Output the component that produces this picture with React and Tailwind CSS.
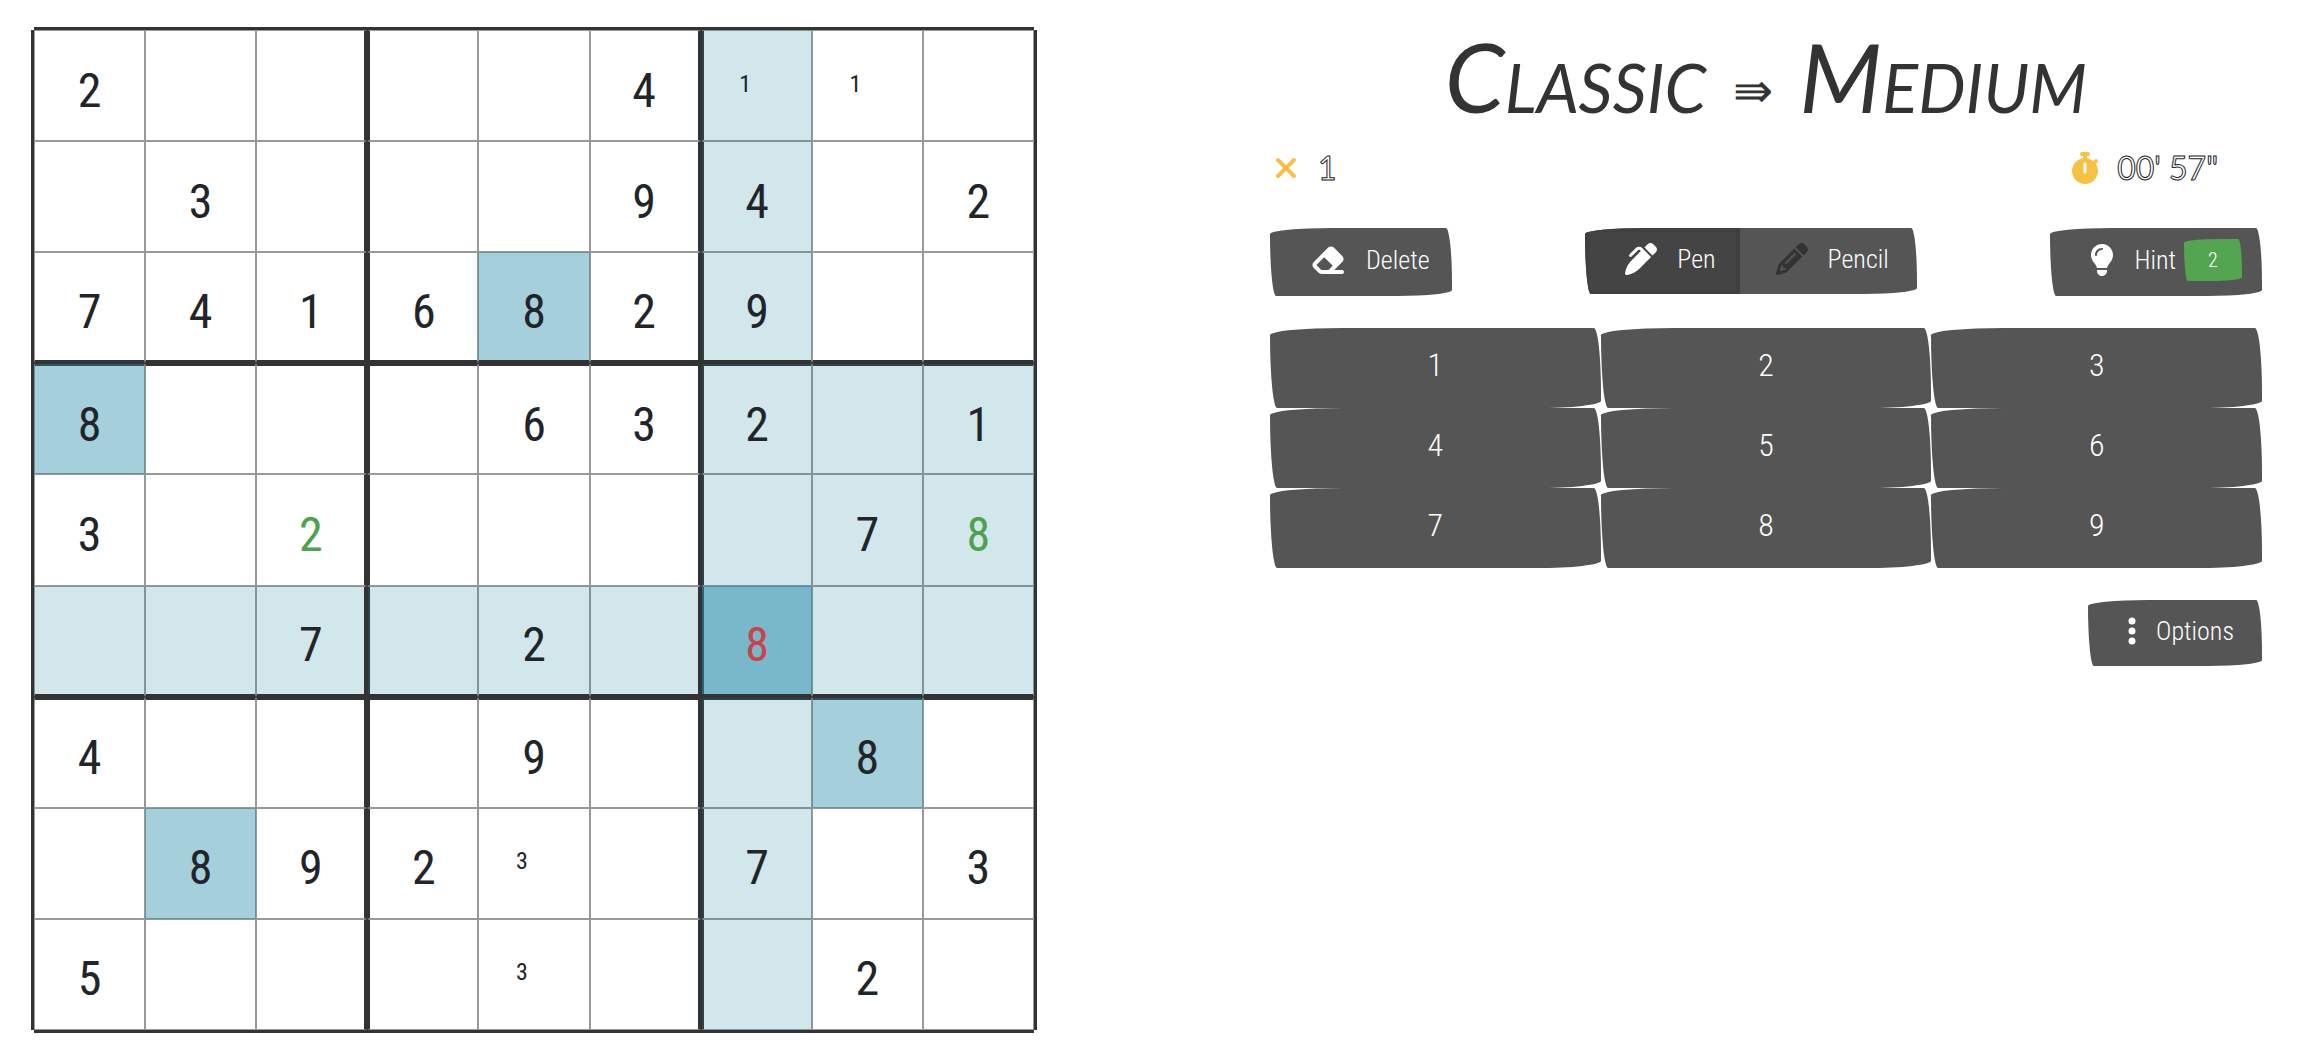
import { FaEraser, FaPenClip, FaPencil, FaLightbulb, FaStopwatch, FaXmark, FaEllipsisVertical } from "react-icons/fa6";

const rows = [
  "2....4...",
  ".3...94.2",
  "7416829..",
  "8...632.1",
  "3.2....78",
  "..7.2.8..",
  "4...9..8.",
  ".892..7.3",
  "5......2.",
];
const notes = { "0-6": 1, "0-7": 1, "7-4": 3, "8-4": 3 };
const SEL = { r: 5, c: 6 };

function overlay(r, c, v) {
  if (r === SEL.r && c === SEL.c) return "bg-[#1f87a6]/60";
  if (v === "8" && !(r === 4 && c === 8)) return "bg-[#1f87a6]/40";
  const sameBox = r >= 3 && r <= 5 && c >= 6;
  if (r === SEL.r || c === SEL.c || sameBox) return "bg-[#1f87a0]/20";
  return "";
}

function textColor(r, c) {
  if (r === SEL.r && c === SEL.c) return "text-[#c9434c]";
  if (r === 4 && (c === 2 || c === 8)) return "text-[#4fa14f]";
  return "text-[#212529]";
}

function Cell({ r, c }) {
  const v = rows[r][c];
  const note = notes[r + "-" + c];
  const bx = c === 3 || c === 6 ? "border-l-3 border-l-[#333]" : c === 2 || c === 5 ? "border-r-3 border-r-[#333]" : "";
  const by = r === 3 || r === 6 ? "border-t-3 border-t-[#333]" : r === 2 || r === 5 ? "border-b-3 border-b-[#333]" : "";
  const ox = c === 3 || c === 6 ? "-left-[2px] -right-px" : c === 2 || c === 5 ? "-left-px right-0" : "-inset-x-px";
  const oy = r === 3 || r === 6 ? "-top-[2px] -bottom-px" : r === 2 || r === 5 ? "-top-px bottom-0" : "-inset-y-px";
  return (
    <button
      type="button"
      aria-label={`Row ${r + 1}, column ${c + 1}`}
      className={`relative flex min-h-0 min-w-0 items-center justify-center border border-[#999] ${bx} ${by} ${textColor(r, c)}`}
    >
      <span className={`absolute ${ox} ${oy} ${overlay(r, c, v)}`} />
      {v !== "." && <span className="relative pt-2.5 text-5xl">{v}</span>}
      {note && <span className="relative pr-6 pb-1 text-2xl leading-6">{note}</span>}
    </button>
  );
}

const sketchy = "rounded-[255px_25px_225px_25px/25px_225px_25px_255px]";
const btn = "flex items-center bg-[#555] text-white";
const outlined = "font-['Lato',sans-serif] text-white [-webkit-text-stroke:1px_#212529]";

export default function App() {
  return (
    <main className="flex items-start bg-white pt-[30px] pr-[38px] pb-6 pl-[34px] font-['Roboto_Condensed','Lato',sans-serif] text-[#212529]">
      <section aria-label="Board" className="grid aspect-square w-[45%] max-w-[1000px] shrink-0 grid-cols-9 grid-rows-9 shadow-[3px_0px_0px_#333,-3px_0px_0px_#333,0px_3px_0px_#333,0px_-3px_0px_#333]">
        {rows.map((row, r) => row.split("").map((_, c) => <Cell key={r + "-" + c} r={r} c={c} />))}
      </section>

      <section aria-label="Controls" className="ml-auto w-[45%] max-w-[992px]">
        <h1 className="h-[114px] text-center font-['Lato',sans-serif] text-8xl leading-[92px] text-[#333] italic [font-variant:small-caps]">
          Classic <span className="px-1 align-middle text-5xl not-italic">⇛</span> Medium
        </h1>
        <div className="flex h-12 items-center justify-between pr-11 text-[32px]">
          <span className="flex items-center gap-4"><FaXmark className="size-8 text-[#f7c244]" /><span className={outlined}>1</span></span>
          <span className="flex items-center gap-4"><FaStopwatch className="size-8 text-[#f7c244]" /><span className={outlined}>00' 57"</span></span>
        </div>
        <div className="mt-9 flex items-start justify-between text-[26px] font-light">
          <button type="button" className={`${btn} ${sketchy} h-[68px] gap-5 pr-[22px] pb-1 pl-10`}><FaEraser className="size-9" />Delete</button>
          <div className={`flex h-[66px] overflow-hidden ${sketchy}`}>
            <button type="button" aria-pressed="true" className="flex items-center gap-5 border-4 border-[#404040] bg-[#444] pr-5 pb-1 pl-9 text-white"><FaPenClip className="size-8" />Pen</button>
            <button type="button" className={`${btn} gap-5 pr-7 pb-1 pl-9`}><FaPencil className="size-8 text-[#333]" />Pencil</button>
          </div>
          <button type="button" className={`${btn} ${sketchy} h-[68px] pr-5 pb-1 pl-9`}>
            <FaLightbulb className="mr-4 size-8" />Hint
            <span className={`ml-2 flex h-[42px] w-[58px] items-center justify-center bg-[#53a551] text-xl ${sketchy}`}>2</span>
          </button>
        </div>
        <div className="mt-8 grid grid-cols-3 text-[32px] font-light">
          {[1, 2, 3, 4, 5, 6, 7, 8, 9].map((n) => (
            <button type="button" key={n} className={`h-20 bg-[#555] pb-1.5 text-white ${sketchy}`}>{n}</button>
          ))}
        </div>
        <div className="mt-8 flex justify-end text-[26px] font-light">
          <button type="button" className={`${btn} ${sketchy} h-[66px] gap-2 pr-7 pb-1 pl-7`}><FaEllipsisVertical className="size-8" />Options</button>
        </div>
      </section>
    </main>
  );
}
